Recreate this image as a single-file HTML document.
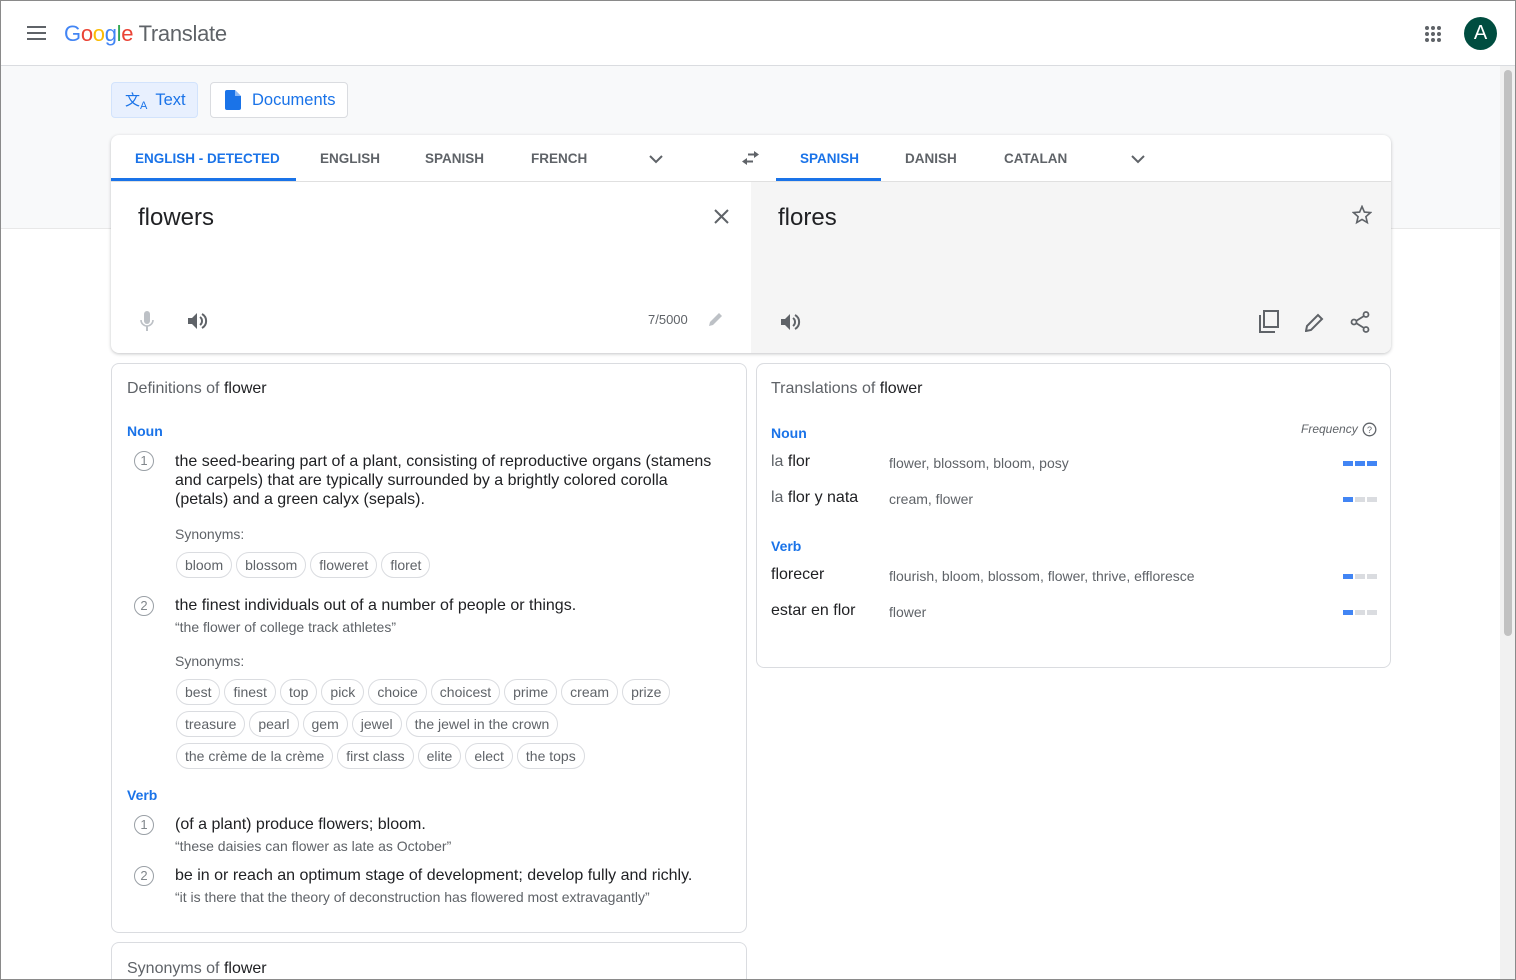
<!DOCTYPE html>
<html style="width:1516px;height:980px;overflow:hidden"><head><meta charset="utf-8"><style>
*{box-sizing:border-box;margin:0;padding:0}
body{width:1516px;height:980px;overflow:hidden;font-family:"Liberation Sans",Arial,sans-serif;background:#fff;position:relative;color:#202124}
.abs{position:absolute}
.frame{position:absolute;left:0;top:0;width:1516px;height:980px;border:1px solid #8a8a8a;pointer-events:none;z-index:50}
.hdr{left:0;top:0;width:1516px;height:66px;background:#fff;border-bottom:1px solid #dadce0}
.band{left:0;top:66px;width:1500px;height:163px;background:#f8f9fa;border-bottom:1px solid #e8e8e8}
.btn{top:82px;height:36px;border-radius:4px;font-size:16px;color:#1a73e8;display:flex;align-items:center;font-weight:bold}
.card{background:#fff;border-radius:8px;border:1px solid #dadce0}
.tab{top:135px;height:46px;line-height:48px;font-size:13.5px;color:#5f6368;font-weight:bold}
.tab.on{color:#1a73e8}
.t{position:absolute;white-space:nowrap}
.chip{display:inline-block;height:26px;line-height:24px;border:1px solid #dadce0;border-radius:13px;padding:0 8px;font-size:14px;color:#5f6368;margin-right:4px}
.num{position:absolute;width:20px;height:20px;border:1px solid #9aa0a6;border-radius:50%;font-size:13px;color:#80868b;text-align:center;line-height:18px}
.bar{position:absolute;width:34px;height:5px;display:flex;gap:2px}
.bar i{flex:1;background:#dadce0;display:block}
.bar i.b{background:#4285f4}
</style></head><body>
<div class="frame"></div>
<div class="abs hdr"></div>
<svg class="abs" style="left:27px;top:25px" width="20" height="16"><rect y="1" width="19" height="2" fill="#5f6368"/><rect y="7" width="19" height="2" fill="#5f6368"/><rect y="13" width="19" height="2" fill="#5f6368"/></svg>
<div class="t" style="left:64px;top:21px;font-size:22px;letter-spacing:-.3px"><span style="color:#4285f4">G</span><span style="color:#ea4335">o</span><span style="color:#fbbc05">o</span><span style="color:#4285f4">g</span><span style="color:#34a853">l</span><span style="color:#ea4335">e</span> <span style="color:#5f6368">Translate</span></div>
<svg class="abs" style="left:1424px;top:25px" width="18" height="18" fill="#5f6368"><circle cx="3" cy="3" r="2"/><circle cx="9" cy="3" r="2"/><circle cx="15" cy="3" r="2"/><circle cx="3" cy="9" r="2"/><circle cx="9" cy="9" r="2"/><circle cx="15" cy="9" r="2"/><circle cx="3" cy="15" r="2"/><circle cx="9" cy="15" r="2"/><circle cx="15" cy="15" r="2"/></svg>
<div class="abs" style="left:1464px;top:17px;width:33px;height:33px;border-radius:50%;background:#004d40;color:#fff;font-size:20px;text-align:center;line-height:33px">A</div>
<div class="abs band"></div>
<div class="abs" style="left:1500px;top:66px;width:16px;height:914px;background:#f1f1f1"></div>
<div class="abs" style="left:1504px;top:70px;width:8px;height:566px;background:#c1c1c1;border-radius:4px"></div>

<div class="abs btn" style="left:111px;width:87px;background:#e8f0fe;border:1px solid #d2e3fc"><span style="margin-left:13px;font-size:15px;font-weight:normal">文<sub style="font-size:11px">A</sub></span><span style="margin-left:8px;font-weight:normal;font-size:16.5px">Text</span></div>
<div class="abs btn" style="left:210px;width:138px;background:#fff;border:1px solid #dadce0"><svg style="margin-left:14px" width="16" height="20"><path d="M2 0h8l6 6v12a2 2 0 0 1-2 2H2a2 2 0 0 1-2-2V2a2 2 0 0 1 2-2z" fill="#1a73e8"/><path d="M10 0v6h6z" fill="#fff" opacity=".5"/></svg><span style="margin-left:11px;font-weight:normal;font-size:16.5px">Documents</span></div>

<div class="abs card" style="left:111px;top:135px;width:1280px;height:218px;box-shadow:0 1px 3px rgba(60,64,67,.3);overflow:hidden;border:none">
 <div class="abs" style="left:640px;top:46px;width:640px;height:172px;background:#f5f5f5"></div>
 <div class="abs" style="left:0;top:46px;width:1280px;height:1px;background:#e0e0e0"></div>
</div>
<div class="abs" style="left:111px;top:178px;width:185px;height:3px;background:#1a73e8"></div>
<div class="abs" style="left:776px;top:178px;width:105px;height:3px;background:#1a73e8"></div>
<div class="abs tab on" style="left:135px">ENGLISH - DETECTED</div>
<div class="abs tab" style="left:320px">ENGLISH</div>
<div class="abs tab" style="left:425px">SPANISH</div>
<div class="abs tab" style="left:531px">FRENCH</div>
<svg class="abs" style="left:648px;top:154px" width="16" height="10"><path d="M2 2l6 6 6-6" stroke="#5f6368" stroke-width="2" fill="none"/></svg>
<svg class="abs" style="left:740px;top:150px" width="22" height="16" fill="#5f6368"><path d="M14 1l5 3.5-5 3.5V5.5H8v-2h6z M7 8v2.5h6v2H7V15L2 11.5z"/></svg>
<div class="abs tab on" style="left:800px">SPANISH</div>
<div class="abs tab" style="left:905px">DANISH</div>
<div class="abs tab" style="left:1004px">CATALAN</div>
<svg class="abs" style="left:1130px;top:154px" width="16" height="10"><path d="M2 2l6 6 6-6" stroke="#5f6368" stroke-width="2" fill="none"/></svg>

<div class="t" style="left:138px;top:204px;font-size:24px">flowers</div>
<svg class="abs" style="left:714px;top:209px" width="15" height="15"><path d="M1 1l13 13M14 1L1 14" stroke="#5f6368" stroke-width="2"/></svg>
<svg class="abs" style="left:139px;top:311px" width="16" height="22" fill="#bdc1c6"><rect x="5" y="0" width="6" height="13" rx="3"/><path d="M2 9a6 6 0 0 0 12 0" stroke="#bdc1c6" stroke-width="1.6" fill="none"/><rect x="7" y="15" width="2" height="5"/></svg>
<svg class="abs" style="left:187px;top:311px" width="22" height="20" fill="#5f6368"><path d="M1 7h4l5-5v16l-5-5H1z"/><path d="M13 6a5 5 0 0 1 0 8M15 3a8 8 0 0 1 0 14" stroke="#5f6368" stroke-width="2" fill="none"/></svg>
<div class="t" style="left:648px;top:312px;font-size:13px;color:#5f6368">7/5000</div>
<svg class="abs" style="left:707px;top:311px" width="17" height="17"><path d="M2 15l1-4 9-9 3 3-9 9z" fill="#bdc1c6"/></svg>

<div class="t" style="left:778px;top:204px;font-size:24px">flores</div>
<svg class="abs" style="left:1352px;top:205px" width="20" height="20"><path d="M10 1.5l2.4 5.6 6.1.5-4.6 4 1.4 6-5.3-3.2-5.3 3.2 1.4-6-4.6-4 6.1-.5z" fill="none" stroke="#5f6368" stroke-width="1.6"/></svg>
<svg class="abs" style="left:780px;top:312px" width="22" height="20" fill="#5f6368"><path d="M1 7h4l5-5v16l-5-5H1z"/><path d="M13 6a5 5 0 0 1 0 8M15 3a8 8 0 0 1 0 14" stroke="#5f6368" stroke-width="2" fill="none"/></svg>
<svg class="abs" style="left:1258px;top:310px" width="22" height="24" fill="none" stroke="#5f6368" stroke-width="2"><path d="M2 5v17h15"/><rect x="6" y="1" width="14" height="16"/></svg>
<svg class="abs" style="left:1305px;top:312px" width="20" height="20"><path d="M1 19l1-5 11-11 4 4-11 11z" fill="none" stroke="#5f6368" stroke-width="2"/></svg>
<svg class="abs" style="left:1350px;top:311px" width="20" height="22" fill="none" stroke="#5f6368" stroke-width="1.8"><circle cx="16" cy="3.5" r="2.5"/><circle cx="4" cy="11" r="2.5"/><circle cx="16" cy="18.5" r="2.5"/><path d="M6 10l8-5M6 12l8 5"/></svg>

<!-- Definitions -->
<div class="abs card" style="left:111px;top:363px;width:636px;height:570px"></div>
<div class="t" style="left:127px;top:380px;font-size:16px;color:#5f6368">Definitions of <span style="color:#202124">flower</span></div>
<div class="t" style="left:127px;top:423px;font-size:14px;color:#1a73e8;font-weight:bold">Noun</div>
<div class="num" style="left:134px;top:451px">1</div>
<div class="abs" style="left:175px;top:452px;width:548px;font-size:16px;line-height:19px">the seed-bearing part of a plant, consisting of reproductive organs (stamens and carpels) that are typically surrounded by a brightly colored corolla (petals) and a green calyx (sepals).</div>
<div class="t" style="left:175px;top:526px;font-size:14px;color:#5f6368">Synonyms:</div>
<div class="t" style="left:176px;top:552px"><span class="chip">bloom</span><span class="chip">blossom</span><span class="chip">floweret</span><span class="chip">floret</span></div>
<div class="num" style="left:134px;top:596px">2</div>
<div class="t" style="left:175px;top:597px;font-size:16px">the finest individuals out of a number of people or things.</div>
<div class="t" style="left:175px;top:619px;font-size:14px;color:#5f6368">“the flower of college track athletes”</div>
<div class="t" style="left:175px;top:653px;font-size:14px;color:#5f6368">Synonyms:</div>
<div class="t" style="left:176px;top:679px"><span class="chip">best</span><span class="chip">finest</span><span class="chip">top</span><span class="chip">pick</span><span class="chip">choice</span><span class="chip">choicest</span><span class="chip">prime</span><span class="chip">cream</span><span class="chip">prize</span></div>
<div class="t" style="left:176px;top:711px"><span class="chip">treasure</span><span class="chip">pearl</span><span class="chip">gem</span><span class="chip">jewel</span><span class="chip">the jewel in the crown</span></div>
<div class="t" style="left:176px;top:743px"><span class="chip">the crème de la crème</span><span class="chip">first class</span><span class="chip">elite</span><span class="chip">elect</span><span class="chip">the tops</span></div>
<div class="t" style="left:127px;top:787px;font-size:14px;color:#1a73e8;font-weight:bold">Verb</div>
<div class="num" style="left:134px;top:815px">1</div>
<div class="t" style="left:175px;top:816px;font-size:16px">(of a plant) produce flowers; bloom.</div>
<div class="t" style="left:175px;top:838px;font-size:14px;color:#5f6368">“these daisies can flower as late as October”</div>
<div class="num" style="left:134px;top:866px">2</div>
<div class="t" style="left:175px;top:867px;font-size:16px">be in or reach an optimum stage of development; develop fully and richly.</div>
<div class="t" style="left:175px;top:889px;font-size:14px;color:#5f6368">“it is there that the theory of deconstruction has flowered most extravagantly”</div>

<div class="abs card" style="left:111px;top:942px;width:636px;height:38px;border-bottom:none;border-radius:8px 8px 0 0"></div>
<div class="t" style="left:127px;top:960px;font-size:16px;color:#5f6368">Synonyms of <span style="color:#202124">flower</span></div>

<!-- Translations -->
<div class="abs card" style="left:756px;top:363px;width:635px;height:305px"></div>
<div class="t" style="left:771px;top:380px;font-size:16px;color:#5f6368">Translations of <span style="color:#202124">flower</span></div>
<div class="t" style="left:771px;top:425px;font-size:14px;color:#1a73e8;font-weight:bold">Noun</div>
<div class="t" style="left:1301px;top:422px;font-size:12px;color:#5f6368;font-style:italic">Frequency</div>
<svg class="abs" style="left:1362px;top:422px" width="15" height="15"><circle cx="7.5" cy="7.5" r="6.3" fill="none" stroke="#5f6368" stroke-width="1.3"/><text x="7.5" y="11" font-size="9" text-anchor="middle" fill="#5f6368" font-family="Liberation Sans">?</text></svg>
<div class="t" style="left:771px;top:453px;font-size:16px"><span style="color:#5f6368">la</span> flor</div>
<div class="t" style="left:889px;top:455px;font-size:14px;color:#5f6368">flower, blossom, bloom, posy</div>
<div class="bar" style="left:1343px;top:461px"><i class="b"></i><i class="b"></i><i class="b"></i></div>
<div class="t" style="left:771px;top:489px;font-size:16px"><span style="color:#5f6368">la</span> flor y nata</div>
<div class="t" style="left:889px;top:491px;font-size:14px;color:#5f6368">cream, flower</div>
<div class="bar" style="left:1343px;top:497px"><i class="b"></i><i></i><i></i></div>
<div class="t" style="left:771px;top:538px;font-size:14px;color:#1a73e8;font-weight:bold">Verb</div>
<div class="t" style="left:771px;top:566px;font-size:16px">florecer</div>
<div class="t" style="left:889px;top:568px;font-size:14px;color:#5f6368">flourish, bloom, blossom, flower, thrive, effloresce</div>
<div class="bar" style="left:1343px;top:574px"><i class="b"></i><i></i><i></i></div>
<div class="t" style="left:771px;top:602px;font-size:16px">estar en flor</div>
<div class="t" style="left:889px;top:604px;font-size:14px;color:#5f6368">flower</div>
<div class="bar" style="left:1343px;top:610px"><i class="b"></i><i></i><i></i></div>
</body></html>
